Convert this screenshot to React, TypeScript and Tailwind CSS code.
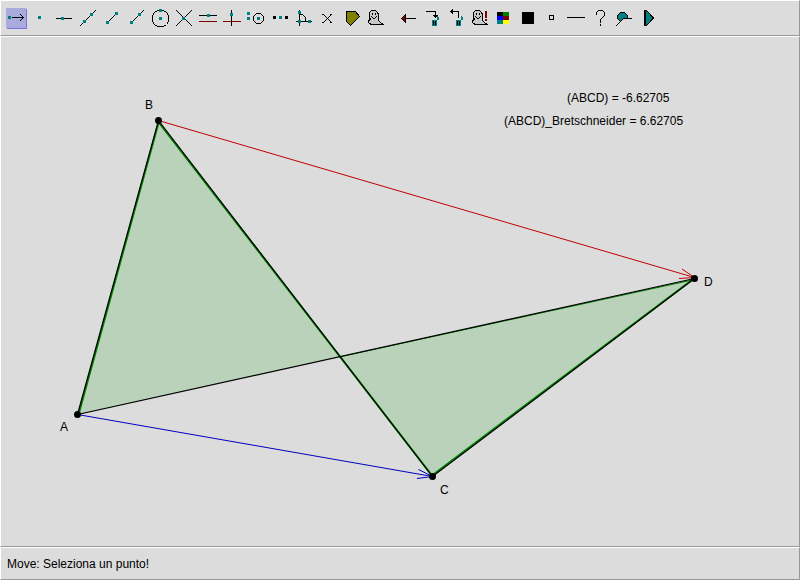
import type { ReactNode } from "react";

type Tool = { label: string; icon: ReactNode; selected?: boolean };

const TEAL = "#008080";
const MAROON = "#800000";

function Dot({ x, y, fill = TEAL }: { x: number; y: number; fill?: string }) {
  return <rect x={x} y={y} width="3" height="3" fill={fill} />;
}

function Stroke({ d, color = "black", fill = "none" }: { d: string; color?: string; fill?: string }) {
  return <path d={d} stroke={color} fill={fill} strokeWidth="1" />;
}

function Ghost() {
  return (
    <>
      <Stroke
        fill="#c8c8c8"
        d="M7.5 4.5H11.5L13.5 6.5L14.5 8.5V14.5L16.5 16.5L19.5 18.5H7.5L5.5 17.5L4.5 16.5V14.5L6.5 13.5L5.5 11.5V6.5Z"
      />
      <rect x="8" y="7" width="1" height="2" />
      <rect x="11" y="7" width="1" height="2" />
      <rect x="7" y="10" width="1" height="1" />
      <rect x="8" y="11" width="1" height="1" />
      <rect x="9" y="12" width="2" height="1" />
      <rect x="11" y="11" width="1" height="1" />
      <rect x="12" y="10" width="1" height="1" />
    </>
  );
}

function Bin() {
  return (
    <>
      <rect x="12" y="14" width="5" height="6" fill={TEAL} />
      <path d="M17 10H18V11H19V14H17Z" fill={TEAL} />
      <rect x="13" y="15" width="1" height="4" />
      <rect x="15" y="15" width="1" height="4" />
    </>
  );
}

const constructionTools: Tool[] = [
  {
    label: "Move",
    selected: true,
    icon: (
      <>
        <rect x="3" y="3" width="20" height="20" fill="#7777dd" />
        <rect x="2" y="2" width="20" height="20" fill="#aaaadd" />
        <Dot x={4} y={10} />
        <Stroke d="M8 11.5H20M16 8L19.5 11.5L16 15" />
      </>
    ),
  },
  { label: "Point", icon: <Dot x={10} y={10} /> },
  { label: "Point on object", icon: <><Stroke d="M4 12.5H20" /><Dot x={9} y={11} /></> },
  { label: "Line", icon: <><Stroke d="M4 20L20 4" /><Dot x={7} y={14} /><Dot x={14} y={7} /></> },
  { label: "Segment", icon: <><Stroke d="M8 16L16 8" /><Dot x={6} y={15} /><Dot x={15} y={6} /></> },
  { label: "Ray", icon: <><Stroke d="M8 16L20 4" /><Dot x={6} y={15} /><Dot x={14} y={7} /></> },
  {
    label: "Circle",
    icon: (
      <>
        <Stroke d="M9.5 4.5H15.5L18.5 6.5L20.5 9.5V15.5L18.5 18.5L15.5 20.5H9.5L6.5 18.5L4.5 15.5V9.5L6.5 6.5Z" />
        <Dot x={11} y={11} /><Dot x={11} y={3} />
      </>
    ),
  },
  { label: "Intersection", icon: <><Stroke d="M4 4L20 20M4 20L20 4" /><Dot x={10} y={11} /></> },
  { label: "Parallel", icon: <><Stroke d="M3 9.5H21" /><Stroke d="M3 15.5H21" color={MAROON} /><Dot x={11} y={8} /></> },
  { label: "Perpendicular", icon: <><Stroke d="M3 15.5H21" color={MAROON} /><Stroke d="M11.5 4V20" /><Dot x={10} y={7} /></> },
  {
    label: "Compass",
    icon: (
      <>
        <Stroke d="M12.5 7.5H16.5L19.5 10.5V14.5L16.5 17.5H12.5L9.5 14.5V10.5Z" />
        <Dot x={3} y={6} /><Dot x={3} y={11} /><Dot x={13} y={11} />
      </>
    ),
  },
  { label: "Midpoint", icon: <><Dot x={5} y={10} fill="black" /><Dot x={11} y={10} /><Dot x={17} y={10} fill="black" /></> },
  {
    label: "Angle",
    icon: (
      <>
        <Stroke d="M7.5 4V20M4 15.5H20M8 8.5H10.5L13.5 11.5V15" />
        <Dot x={6} y={5} /><Dot x={6} y={14} /><Dot x={16} y={14} />
      </>
    ),
  },
  { label: "Expression", icon: <Stroke d="M6 8.5H8M14 8.5H16M6 16.5H8M14 16.5H16M7 8L15 16M7 17L15 9" /> },
  { label: "Area", icon: <Stroke d="M6.5 5.5H15.5L19.5 10.5L10.5 19.5L6.5 15.5Z" fill="#808000" /> },
  { label: "Hide", icon: <Ghost /> },
];

const editTools: Tool[] = [
  { label: "Back", icon: <><Stroke d="M5 12.5H20" /><Stroke d="M5.5 12.5L9.5 8.5V16.5Z" fill={MAROON} /></> },
  { label: "Delete", icon: <><Stroke d="M6 5.5H15.5V11" /><path d="M13 9H18L15.5 12Z" /><Bin /></> },
  { label: "Undelete", icon: <><Stroke d="M8 5.5H14.5V12" /><path d="M6 5.5L9 3V8Z" /><Bin /></> },
  {
    label: "Show hidden",
    icon: (
      <>
        <Ghost />
        <rect x="17" y="5" width="2" height="7" fill={MAROON} />
        <rect x="17" y="13" width="2" height="2" fill={MAROON} />
      </>
    ),
  },
  {
    label: "Color",
    icon: (
      <>
        <rect x="5" y="6" width="6" height="4" fill="black" />
        <rect x="11" y="6" width="6" height="4" fill="#008000" />
        <rect x="5" y="10" width="6" height="4" fill="#0000ff" />
        <rect x="11" y="10" width="6" height="4" fill={MAROON} />
        <rect x="5" y="14" width="6" height="4" fill={TEAL} />
        <rect x="11" y="14" width="6" height="4" fill="#ffff00" />
      </>
    ),
  },
  { label: "Fill", icon: <rect x="6" y="6" width="12" height="12" /> },
  { label: "Point style", icon: <Stroke d="M9.5 9.5H13.5V13.5H9.5Z" /> },
  { label: "Line style", icon: <Stroke d="M3 11.5H21" /> },
  {
    label: "Help",
    icon: <><Stroke d="M8.5 9V6.5L10.5 4.5H14.5L16.5 6.5V9.5L12.5 13.5V17" /><rect x="12" y="18" width="1" height="2" /></>,
  },
  {
    label: "Zoom",
    icon: (
      <>
        <Stroke d="M8.5 6.5H12.5L15.5 9.5V12.5L12.5 15.5H8.5L5.5 12.5V9.5Z" fill={TEAL} />
        <path d="M5 19L12 12.5H16V16H9Z" fill="#dcdcdc" />
        <Stroke d="M4 20L11.5 12.5H20" />
      </>
    ),
  },
  { label: "Replay", icon: <Stroke d="M8.5 4.5H10.5L17.5 12L10.5 19.5H8.5ZM9.5 5V19" fill={TEAL} /> },
];

function ToolGroup({ tools }: { tools: Tool[] }) {
  return (
    <div className="flex">
      {tools.map((tool) => (
        <button key={tool.label} type="button" aria-label={tool.label} aria-pressed={!!tool.selected} className="size-6 shrink-0">
          <svg className="block size-6" viewBox="0 0 24 24" shapeRendering="crispEdges" aria-hidden="true">
            {tool.icon}
          </svg>
        </button>
      ))}
    </div>
  );
}

const PANEL = "border border-t-white border-l-white border-r-[#999999] border-b-[#999999]";

const points = [
  { name: "A", x: 77.5, y: 414.5, lx: 60, ly: 431 },
  { name: "B", x: 158.5, y: 120.5, lx: 145, ly: 109 },
  { name: "C", x: 432.5, y: 476.5, lx: 440, ly: 494 },
  { name: "D", x: 694.5, y: 278.5, lx: 704, ly: 286 },
];

function Construction() {
  const outline = "77.5,414.5 158.5,120.5 432.5,476.5 694.5,278.5";
  return (
    <svg className="block h-full w-full" viewBox="1 37 798 509" role="img" aria-label="Quadrilateral ABCD">
      <polygon points={outline} fill="#bad2ba" />
      <path d="M78.5 414.5L159 121M158 121.5L432 475.5L694 278.5" fill="none" stroke="#008000" strokeWidth="2" />
      <path d="M339 357L694.5 279.5" stroke="#008000" />
      <polygon points={outline} fill="none" stroke="black" strokeWidth="1.2" />
      <path d="M158.5 120.5L694.5 277.5M682 269L694.5 277.5L679 278.5" fill="none" stroke="#c00000" />
      <path d="M77.5 414.5L432.5 476.5M418.5 469.5L432.5 476.5L417 478.5" fill="none" stroke="#0000c0" />
      {points.map((p) => (
        <circle key={p.name} cx={p.x} cy={p.y} r="3.5" />
      ))}
      <g fontSize="12">
        {points.map((p) => (
          <text key={p.name} x={p.lx} y={p.ly}>{p.name}</text>
        ))}
        <text x="567" y="102">(ABCD) = -6.62705</text>
        <text x="504" y="125">(ABCD)_Bretschneider = 6.62705</text>
      </g>
    </svg>
  );
}

export default function App() {
  return (
    <div className="flex h-screen flex-col bg-[#dcdcdc] font-['Liberation_Sans',Arial,sans-serif] text-xs text-black">
      <header role="toolbar" aria-label="Tools" className={`flex gap-2 px-[3px] py-[5px] ${PANEL}`}>
        <ToolGroup tools={constructionTools} />
        <ToolGroup tools={editTools} />
      </header>
      <main className={`min-h-0 flex-1 ${PANEL}`}>
        <Construction />
      </main>
      <footer className={`px-1.5 pt-2 pb-[7px] ${PANEL}`}>
        <p role="status">Move: Seleziona un punto!</p>
      </footer>
    </div>
  );
}
